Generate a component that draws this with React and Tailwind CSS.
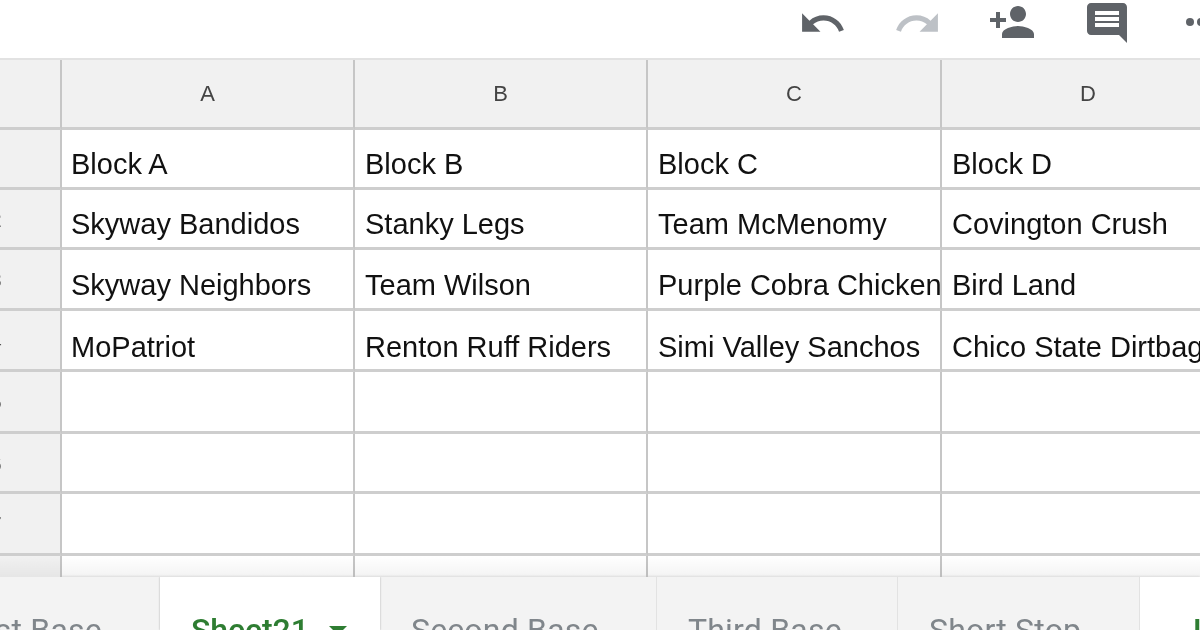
const rows = [
  ["Block A", "Block B", "Block C", "Block D", ""],
  ["Skyway Bandidos", "Stanky Legs", "Team McMenomy", "Covington Crush", "2"],
  ["Skyway Neighbors", "Team Wilson", "Purple Cobra Chicken", "Bird Land", "3"],
  ["MoPatriot", "Renton Ruff Riders", "Simi Valley Sanchos", "Chico State Dirtbags", "4"],
  ["", "", "", "", "5"],
  ["", "", "", "", "6"],
  ["", "", "", "", "7"],
];
const heights = ["h-[60px]", "h-[60px]", "h-[61px]", "h-[61px]", "h-[62px]", "h-[60px]", "h-[62px]"];
const Icon = ({ d, color, size, className }) => (
  <svg viewBox="0 0 24 24" width={size} height={size} fill={color} className={`shrink-0 ${className}`}>
    <path d={d} />
  </svg>
);
const Cell = ({ children, className = "" }) => (
  <div className={`flex items-center overflow-visible whitespace-nowrap border-r-2 border-b-[3px] border-r-[#c6c6c6] border-b-[#cecece] bg-white text-[29px] text-[#111] ${className}`}>
    {children}
  </div>
);
const Tab = ({ w, active, children, caret }) => (
  <div className={`flex h-full shrink-0 pl-[31px] pt-[35px] text-[32px] leading-[36px] ${w} ${active ? "z-10 bg-white font-medium tracking-[-0.1px] text-[#2e7d32] shadow-[0_0_2px_rgba(0,0,0,0.3)]" : "border-r border-[#e2e2e2] bg-[#f3f3f3] tracking-[0.2px] text-[#80868b]"}`}>
    <span className="whitespace-nowrap">{children}</span>
    {caret && <span className="ml-[20px] mt-[14px] h-0 w-0 border-x-[9px] border-t-[9px] border-x-transparent border-t-[#2e7d32]" />}
  </div>
);
export default function App() {
  return (
    <div className="flex h-[630px] w-[1200px] flex-col overflow-hidden bg-white blur-[0.5px] font-['Liberation_Sans',sans-serif]">
      <div className="flex h-[58px] shrink-0 items-start overflow-hidden pl-[798px]">
        <Icon size={49} color="#5f6368" className="mt-[-1px]" d="M12.5 8c-2.65 0-5.05.99-6.9 2.6L2 7v9h9l-3.62-3.62c1.39-1.16 3.16-1.88 5.12-1.88 3.54 0 6.55 2.31 7.6 5.5l2.37-.78C21.08 11.03 17.15 8 12.5 8z" />
        <Icon size={49} color="#bdc1c6" className="ml-[46px] mt-[-1px]" d="M18.4 10.6C16.55 8.99 14.15 8 11.5 8c-4.65 0-8.58 3.03-9.96 7.22L3.9 16c1.05-3.19 4.05-5.5 7.6-5.5 1.95 0 3.73.72 5.12 1.88L13 16h9V7l-3.6 3.6z" />
        <Icon size={48} color="#5f6368" className="ml-[46px] mt-[-2px]" d="M15 12c2.21 0 4-1.79 4-4s-1.79-4-4-4-4 1.79-4 4 1.79 4 4 4zm-9-2V7H4v3H1v2h3v3h2v-3h3v-2H6zm9 4c-2.67 0-8 1.34-8 4v2h16v-2c0-2.66-5.33-4-8-4z" />
        <Icon size={48} color="#5f6368" className="ml-[47px] mt-[-1px]" d="M21.99 4c0-1.1-.89-2-1.99-2H4c-1.1 0-2 .9-2 2v12c0 1.1.9 2 2 2h14l4 4-.01-18zM18 14H6v-2h12v2zm0-3H6V9h12v2zm0-3H6V6h12v2z" />
        <div className="ml-[55px] mt-[18px] flex shrink-0 gap-[3px]">
          <span className="size-[8px] shrink-0 rounded-full bg-[#5f6368]" />
          <span className="size-[8px] shrink-0 rounded-full bg-[#5f6368]" />
        </div>
      </div>
      <div className="relative min-h-0 flex-1 overflow-hidden border-t-2 border-[#e2e2e2]">
        <div className="grid grid-cols-[62px_293px_293px_294px_400px]">
          <div className="h-[70px] border-r-2 border-b-[3px] border-r-[#c6c6c6] border-b-[#cecece] bg-[#f1f1f1]" />
          {["A", "B", "C", "D"].map((c) => (
            <div key={c} className="flex h-[70px] items-center justify-center border-r-2 border-b-[3px] border-r-[#c6c6c6] border-b-[#cecece] bg-[#f1f1f1] pb-[1px] text-[22px] text-[#444]">
              <span className={c === "D" ? "mr-[106px]" : ""}>{c}</span>
            </div>
          ))}
          {rows.map((r, i) => (
            <div key={i} className="contents">
              <div className={`overflow-hidden border-r-2 border-b-[3px] border-r-[#c6c6c6] border-b-[#cecece] bg-[#f1f1f1] text-[21px] leading-[59px] text-[#555] ${heights[i]}`}>
                <span className="ml-[-10px]">{r[4]}</span>
              </div>
              {r.slice(0, 4).map((t, j) => (
                <Cell key={j} className={`${heights[i]} ${j === 0 ? "pl-[9px]" : "pl-[10px]"} ${i === 3 ? "pt-[15px]" : "pt-[13px]"}`}>{t}</Cell>
              ))}
            </div>
          ))}
          <div className="h-[30px] border-r-2 border-[#c6c6c6] bg-[#f1f1f1]" />
          <div className="h-[30px] border-r-2 border-[#c6c6c6]" />
          <div className="h-[30px] border-r-2 border-[#c6c6c6]" />
          <div className="h-[30px] border-r-2 border-[#c6c6c6]" />
          <div className="h-[30px]" />
        </div>
        <div className="absolute inset-x-0 bottom-0 h-[21px] bg-gradient-to-b from-transparent to-[#0000000c]" />
      </div>
      <div className="flex h-[53px] shrink-0 overflow-hidden font-['Roboto',sans-serif] shadow-[0_-1px_2px_rgba(0,0,0,0.1)]">
        <div className="flex h-full w-[160px] shrink-0 justify-end overflow-hidden bg-[#f3f3f3] pr-[58px] pt-[35px] text-[32px] leading-[36px] tracking-[0.2px] text-[#80868b]">
          <span className="whitespace-nowrap">First Base</span>
        </div>
        <Tab w="w-[220px]" active caret>Sheet21</Tab>
        <Tab w="w-[277px]">Second Base</Tab>
        <Tab w="w-[241px]">Third Base</Tab>
        <Tab w="w-[242px]">Short Stop</Tab>
        <div className="flex h-full flex-1 bg-white pl-[53px] pt-[35px] text-[32px] font-medium leading-[36px] text-[#2e7d32]">
          <span>L</span>
        </div>
      </div>
    </div>
  );
}
